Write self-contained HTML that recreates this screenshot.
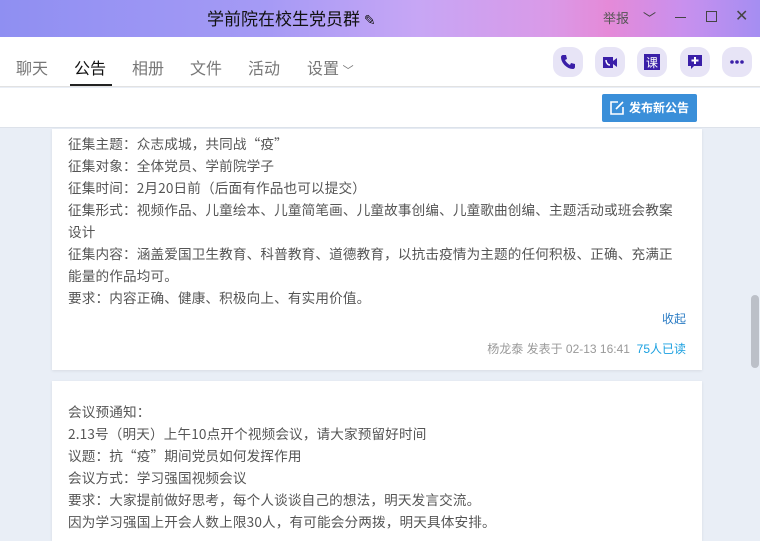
<!DOCTYPE html>
<html><head><meta charset="utf-8"><style>
*{margin:0;padding:0;box-sizing:border-box}
body{width:760px;height:532px;overflow:hidden;font-family:"Liberation Sans","Noto Sans CJK SC",sans-serif;background:#e9eef6;position:relative}
.title{position:absolute;left:0;top:0;width:760px;height:37px;background:linear-gradient(90deg,#8f8ff2 0%,#a59af5 35%,#c7a6f5 55%,#d99ae8 72%,#e58ad8 80%,#c890ee 90%,#a58ef2 100%)}
.title .t{position:absolute;left:207px;top:7px;font-size:17px;color:#111;font-family:"Noto Sans CJK SC",sans-serif;line-height:22px}
.title .w{position:absolute;top:8px;font-size:13px;color:#444}
.tabs{position:absolute;left:0;top:37px;width:760px;height:50px;background:#fff;border-bottom:1px solid #e2e2e2}
.tab{position:absolute;top:19px;font-size:16px;color:#777;font-family:"Noto Sans CJK SC",sans-serif;line-height:22px}
.tab.on{color:#111}
.ul{position:absolute;left:70px;top:47px;width:42px;height:2px;background:#222}
.ic{position:absolute;top:10px;width:30px;height:30px;border-radius:11px;background:#e7e4f6}
.ic svg{position:absolute;left:7px;top:7px}
.bar{position:absolute;left:0;top:88px;width:760px;height:40px;background:#fff;border-bottom:1px solid #dde2ea}
.btn{position:absolute;left:602px;top:6px;width:95px;height:28px;background:#3a8fd9;border-radius:2px;color:#fff;font-size:12px;font-weight:bold;line-height:28px;padding-left:27px}
.card{position:absolute;left:52px;width:650px;background:#fff;box-shadow:0 1px 3px rgba(0,0,0,.08);padding:0 16px;font-size:13.6px;letter-spacing:0.15px;color:#555;line-height:22px;font-family:"Noto Sans CJK SC",sans-serif}
.scroll{position:absolute;left:751px;top:295px;width:8px;height:73px;background:#bcc0c8;border-radius:4px}
</style></head><body>
<div class="title"><div class="t">学前院在校生党员群 <span style="font-size:14px">✎</span></div>
<div class="w" style="left:603px;color:#555">举报</div>
<div class="w" style="left:643px">﹀</div>
<div style="position:absolute;left:675px;top:17px;width:11px;height:1px;background:#444"></div>
<div style="position:absolute;left:706px;top:11px;width:11px;height:11px;border:1px solid #444"></div>
<div class="w" style="left:735px;top:6px;font-size:16px">✕</div>
</div>
<div class="tabs">
<div class="tab" style="left:16px">聊天</div>
<div class="tab on" style="left:74px">公告</div>
<div class="tab" style="left:132px">相册</div>
<div class="tab" style="left:190px">文件</div>
<div class="tab" style="left:248px">活动</div>
<div class="tab" style="left:307px">设置 <span style="font-size:11px">﹀</span></div>
<div class="ul"></div>
<div class="ic" style="left:553px"><svg width="16" height="16" viewBox="0 0 16 16"><path d="M3 1l3 0 1 4-2 1c1 2 3 4 5 5l1-2 4 1v3c0 1-1 2-2 2C7 15 1 9 1 3c0-1 1-2 2-2z" fill="#3a1fa8"/></svg></div>
<div class="ic" style="left:595px"><svg width="16" height="16" viewBox="0 0 16 16"><rect x="1" y="3" width="10" height="11" fill="#3a1fa8"/><path d="M11 7l4-3v9l-4-3z" fill="#3a1fa8"/><path d="M4 6c0 3 2 5 4 5" stroke="#fff" stroke-width="1.5" fill="none"/></svg></div>
<div class="ic" style="left:637px"><svg width="16" height="16" viewBox="0 0 16 16"><rect x="0" y="0" width="16" height="16" fill="#3a1fa8"/><text x="8" y="13" font-size="12" fill="#fff" text-anchor="middle" font-family="Noto Sans CJK SC">课</text></svg></div>
<div class="ic" style="left:680px"><svg width="16" height="16" viewBox="0 0 16 16"><path d="M1 1h14v11H7l-3 3v-3H1z" fill="#3a1fa8"/><path d="M8 3v7M4.5 6.5h7" stroke="#fff" stroke-width="2"/></svg></div>
<div class="ic" style="left:722px"><svg width="16" height="16" viewBox="0 0 16 16"><circle cx="3" cy="8" r="1.8" fill="#3a1fa8"/><circle cx="8" cy="8" r="1.8" fill="#3a1fa8"/><circle cx="13" cy="8" r="1.8" fill="#3a1fa8"/></svg></div>
</div>
<div class="bar"><div class="btn"><svg style="position:absolute;left:8px;top:7px" width="14" height="14" viewBox="0 0 14 14"><path d="M8 1H1v12h12V6" stroke="#fff" stroke-width="1.6" fill="none"/><path d="M6 8l7-7" stroke="#fff" stroke-width="1.6"/></svg>发布新公告</div></div>
<div class="card" style="top:129px;height:241px;padding-top:3px">
<div>征集主题：众志成城，共同战“疫”</div>
<div>征集对象：全体党员、学前院学子</div>
<div>征集时间：2月20日前（后面有作品也可以提交）</div>
<div>征集形式：视频作品、儿童绘本、儿童简笔画、儿童故事创编、儿童歌曲创编、主题活动或班会教案设计</div>
<div>征集内容：涵盖爱国卫生教育、科普教育、道德教育，以抗击疫情为主题的任何积极、正确、充满正<br>能量的作品均可。</div>
<div>要求：内容正确、健康、积极向上、有实用价值。</div>
<div style="text-align:right;color:#2a7bc4;font-size:12px;margin-top:0;letter-spacing:0">收起</div>
<div style="position:absolute;right:16px;top:209px;font-size:12px;letter-spacing:0;color:#999;font-family:'Liberation Sans','Noto Sans CJK SC',sans-serif">杨龙泰 发表于 02-13 16:41 &nbsp;<span style="color:#1aa0e0">75人已读</span></div>
</div>
<div class="card" style="top:381px;height:160px;padding-top:19px">
<div>会议预通知：</div>
<div>2.13号（明天）上午10点开个视频会议，请大家预留好时间</div>
<div>议题：抗“疫”期间党员如何发挥作用</div>
<div>会议方式：学习强国视频会议</div>
<div>要求：大家提前做好思考，每个人谈谈自己的想法，明天发言交流。</div>
<div>因为学习强国上开会人数上限30人，有可能会分两拨，明天具体安排。</div>
</div>
<div class="scroll"></div>
</body></html>
